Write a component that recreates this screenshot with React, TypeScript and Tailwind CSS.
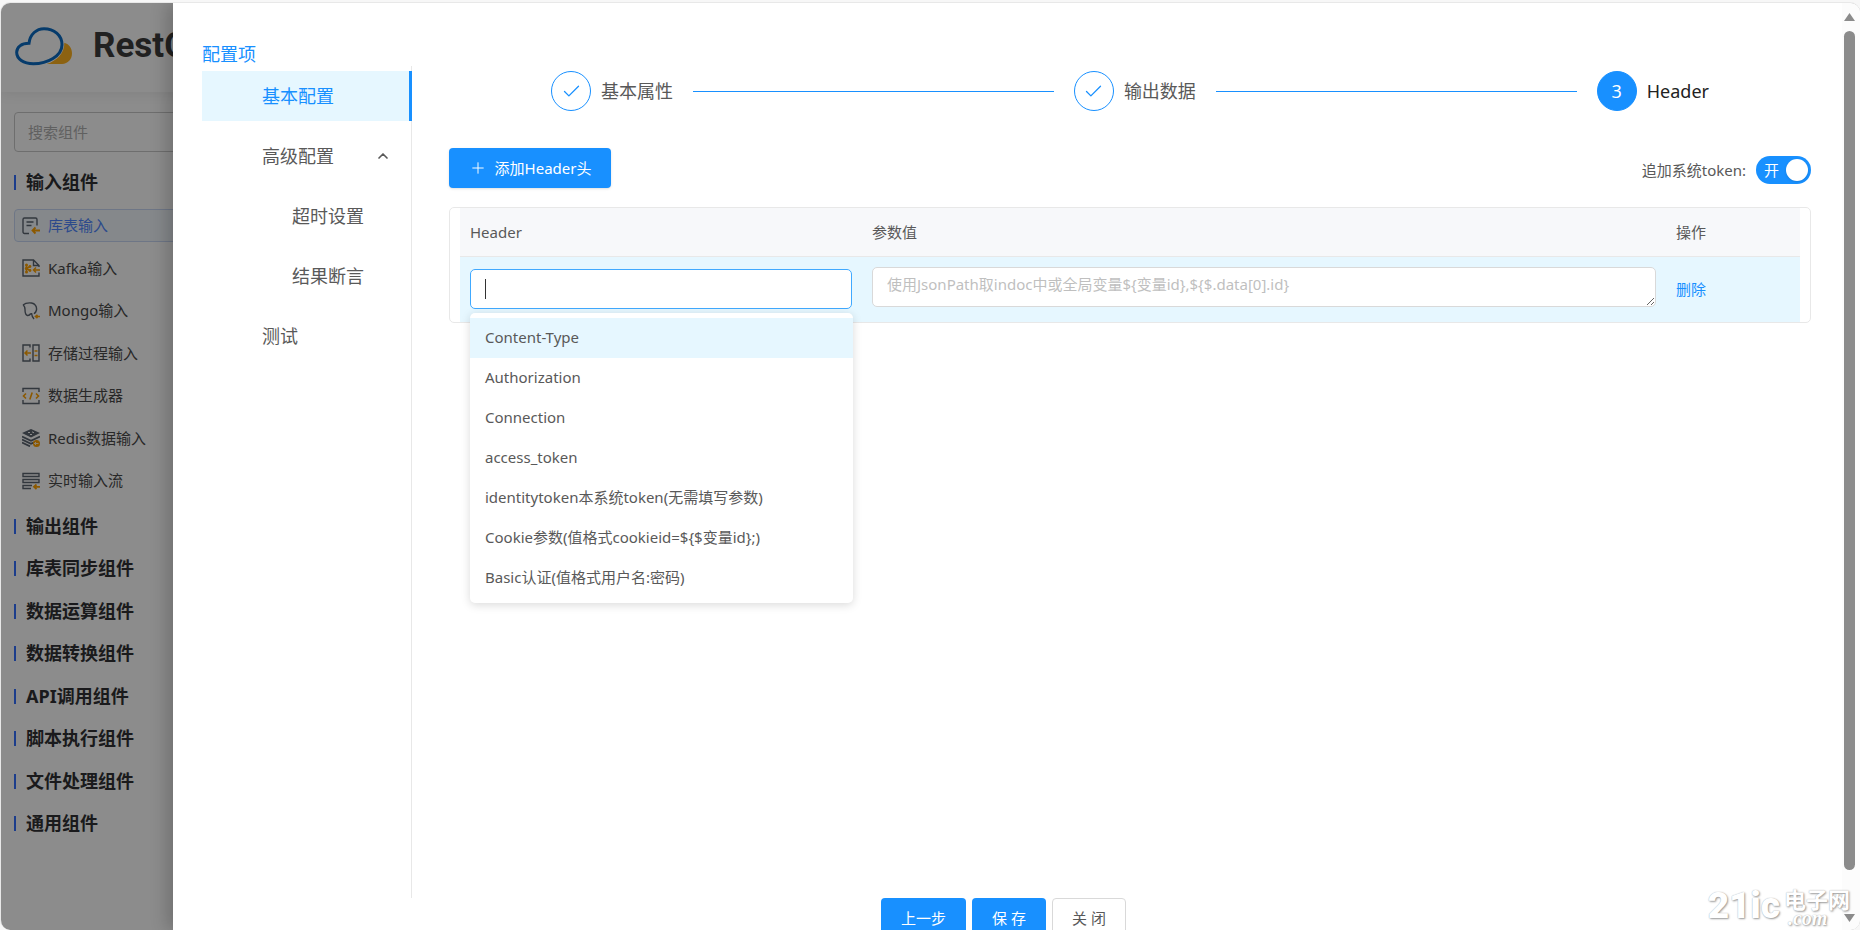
import { useState } from "react";
import type { ReactNode } from "react";
import { Check, ChevronUp, Plus } from "lucide-react";
import clsx from "clsx";

interface Component {
  name: string;
  icon: ReactNode;
}

const DARK = "#5b6470";
const ORANGE = "#ffa200";

const Icon = ({ children }: { children: ReactNode }) => (
  <svg
    viewBox="0 0 18 18"
    className="h-[18px] w-[18px] shrink-0"
    fill="none"
    stroke={DARK}
    strokeWidth="1.4"
    aria-hidden="true"
  >
    {children}
  </svg>
);

const inputs: Component[] = [
  {
    name: "库表输入",
    icon: (
      <Icon>
        <path d="M7 16.5H2.5A1.5 1.5 0 0 1 1 15V2.5A1.5 1.5 0 0 1 2.5 1h11A1.5 1.5 0 0 1 15 2.5v6M4.500 5h7M4.500 8.500h5" />
        <path stroke={ORANGE} strokeWidth="1.8" d="M18 13.500h-7M13.500 10.500l-3 3 3 3" />
      </Icon>
    ),
  },
  {
    name: "Kafka输入",
    icon: (
      <Icon>
        <path d="M17 13.500V17H1V1h10.500L17 6.500V8M11.500 1v5.500H17" />
        <path
          stroke={ORANGE}
          strokeWidth="1.5"
          d="M18 11h-6M14 8.500L11.500 11l2.500 2.500M4.500 6.500v6M4.500 9.500l3.500-2M4.500 9.500l3.500 2"
        />
        <g fill={ORANGE} stroke="none">
          <circle cx="4.500" cy="6" r="1.500" />
          <circle cx="4.500" cy="9.500" r="1.700" />
          <circle cx="4.500" cy="13" r="1.500" />
          <circle cx="8" cy="7.500" r="1.400" />
          <circle cx="8" cy="11.500" r="1.400" />
        </g>
      </Icon>
    ),
  },
  {
    name: "Mongo输入",
    icon: (
      <Icon>
        <path d="M1 3C3 1.200 6.500.700 9.500 1c3.500.500 5.500 3.500 5 7-.300 1.500-1.200 2.800-2.500 3.800M1 3c1.500.800 2 2.200 2 4.500 0 2.500.500 5.500 2.500 6 1.500.300 2.500-.800 3.300-2M9.500 11c.200 2 .500 4 2.500 6" />
        <path stroke={ORANGE} strokeWidth="1.6" d="M18 14.500h-4M15.500 12.800l-2 1.700 2 1.700" />
      </Icon>
    ),
  },
  {
    name: "存储过程输入",
    icon: (
      <Icon>
        <path d="M8 3.500V1H1v16h7v-2.500M11 1h6v16h-6z" />
        <path
          stroke={ORANGE}
          strokeWidth="1.5"
          d="M9 9H3M5.500 6.500L3 9l2.500 2.500M12.500 7h3M12.500 11.500h3"
        />
      </Icon>
    ),
  },
  {
    name: "数据生成器",
    icon: (
      <Icon>
        <path d="M1 5V1.500h16V5M1 13v3.500h16V13" />
        <path
          stroke={ORANGE}
          strokeWidth="1.6"
          d="M4 6.500L1.500 9 4 11.500M14 6.500L16.500 9 14 11.500M10.200 5.500l-2.400 7"
        />
      </Icon>
    ),
  },
  {
    name: "Redis数据输入",
    icon: (
      <Icon>
        <path fill={DARK} stroke="none" d="M9 0l9 4-9 4.500L0 4z" />
        <path strokeWidth="1.8" d="M0 7.500l9 4.300 9-4.300M0 10.500l9 4.300 3-1.400M0 13.500l8 3.800" />
        <path stroke="#fff" strokeWidth="1" d="M6 3.500h2M10 2.800l2 1M8 5.500h2" />
        <circle cx="14.500" cy="14.500" r="3.500" fill={ORANGE} stroke="none" />
        <path stroke="#fff" strokeWidth=".8" d="M16.500 14.500h-4M14 13l-1.500 1.500L14 16" />
      </Icon>
    ),
  },
  {
    name: "实时输入流",
    icon: (
      <Icon>
        <path d="M1 1.500h16v3H1zM1 7.500h16v3H1zM10 13.500H1v3h8" />
        <path stroke={ORANGE} strokeWidth="1.8" d="M18 14.800h-5.500M14.500 12.500l-2.500 2.300 2.500 2.300" />
      </Icon>
    ),
  },
];

const groups = [
  "输出组件",
  "库表同步组件",
  "数据运算组件",
  "数据转换组件",
  "API调用组件",
  "脚本执行组件",
  "文件处理组件",
  "通用组件",
];

const menu = [
  { name: "基本配置", active: true },
  { name: "高级配置", open: true },
  { name: "超时设置", child: true },
  { name: "结果断言", child: true },
  { name: "测试" },
];

const headerOptions = [
  "Content-Type",
  "Authorization",
  "Connection",
  "access_token",
  "identitytoken本系统token(无需填写参数)",
  "Cookie参数(值格式cookieid=${$变量id};)",
  "Basic认证(值格式用户名:密码)",
];

const GroupTitle = ({ name }: { name: string }) => (
  <h2 className="flex h-8 items-center gap-2.5 text-[18px] font-bold text-[#303133]">
    <span className="h-[15px] w-0.5 bg-[#3370ff]" />
    {name}
  </h2>
);

const Logo = () => (
  <svg viewBox="45 81 174 117" className="h-[39px] w-[58px] shrink-0" aria-hidden="true">
    <path
      fill="#ffb31f"
      d="M193 128c15 4 23 17 23 32 0 18-12 32-30 32h-46c30-10 54-32 53-64z"
    />
    <path
      fill="none"
      stroke="#0b6cc4"
      strokeWidth="9"
      d="M87 130C90 102 110 86 132 86c30 0 54 20 54 48 0 34-44 57-86 57-30 0-50-14-50-34 0-16 14-27 37-27z"
    />
  </svg>
);

const Sidebar = () => (
  <aside className="w-[300px] shrink-0 bg-white">
    <div className="flex h-[89px] items-center gap-5 pb-0.5 pl-[14px] shadow-[0_2px_12px_rgba(0,0,0,0.08)]">
      <Logo />
      <span className="font-[Roboto,sans-serif] text-[35px] font-bold text-[#3c3c3c]">RestC</span>
    </div>
    <div className="pl-[13px] pr-3 pt-5">
      <input
        aria-label="搜索组件"
        placeholder="搜索组件"
        className="h-10 w-full rounded border border-[#c8c8c8] px-[13px] placeholder:text-[#b0b0b0]"
      />
      <div className="pt-3.5">
        <GroupTitle name="输入组件" />
      </div>
      <ul className="mt-[11px] flex h-[288px] flex-col justify-between">
        {inputs.map((item, index) => (
          <li
            key={item.name}
            className={clsx(
              "flex h-[33px] items-center gap-2 rounded border px-[7px]",
              index === 0
                ? "border-[#c8d8f5] bg-[#f3f8fe] text-[#5088ff]"
                : "border-transparent text-[#4a4a4a]"
            )}
          >
            {item.icon}
            {item.name}
          </li>
        ))}
      </ul>
      <div className="mt-[13px] flex h-[330px] flex-col justify-between">
        {groups.map((name) => (
          <GroupTitle key={name} name={name} />
        ))}
      </div>
    </div>
  </aside>
);

const ConfigMenu = () => (
  <nav className="flex w-[210px] shrink-0 flex-col gap-2.5 border-r border-[#e8e8e8] pt-[5px] text-[18px]">
    {menu.map((item) => (
      <a
        key={item.name}
        href="#"
        className={clsx(
          "flex h-[50px] items-center justify-between pr-5",
          item.child ? "pl-[90px]" : "pl-[60px]",
          item.active && "-mr-px border-r-[3px] border-[#1890ff] bg-[#e6f7ff] text-[#1890ff]"
        )}
      >
        {item.name}
        {item.open && <ChevronUp size={16} strokeWidth={2.5} />}
      </a>
    ))}
  </nav>
);

const Step = ({ title, number }: { title: string; number?: number }) => (
  <li className={clsx("flex items-center", !number && "flex-1")}>
    <span
      className={clsx(
        "flex h-10 w-10 shrink-0 items-center justify-center rounded-full border border-[#1890ff]",
        number ? "bg-[#1890ff] text-[18px] text-white" : "text-[#1890ff]"
      )}
    >
      {number ?? <Check size={21} strokeWidth={1.5} />}
    </span>
    <span className={clsx("ml-2.5 whitespace-nowrap text-[18px]", number && "text-[#222222]")}>
      {title}
    </span>
    {!number && <span className="mx-5 h-px flex-1 bg-[#1890ff]" />}
  </li>
);

const HeaderSelect = () => (
  <div className="relative">
    <input
      aria-label="Header"
      className="block h-10 w-full rounded-[5px] border border-[#40a9ff] bg-white px-3.5 outline-none"
    />
    <span className="absolute left-[15px] top-2.5 h-5 w-px bg-[#333333]" />
    <ul
      role="listbox"
      className="absolute -right-px left-0 top-11 z-10 rounded-[5px] bg-white py-[5px] shadow-[0_2px_10px_rgba(0,0,0,0.15)]"
    >
      {headerOptions.map((option, index) => (
        <li
          key={option}
          role="option"
          aria-selected={index === 0}
          className={clsx(
            "flex h-10 items-center whitespace-nowrap px-[15px] pb-0.5",
            index === 0 && "bg-[#e6f7ff]"
          )}
        >
          {option}
        </li>
      ))}
    </ul>
  </div>
);

const HeaderTable = () => (
  <div className="mt-[17px] rounded-[5px] border border-[#e8e8e8] px-2.5">
    <table className="w-full table-fixed text-left">
      <thead>
        <tr className="h-12 border-b border-[#e8e8e8] bg-[#f7f8fa]">
          <th className="w-[30%] px-2.5 font-normal">Header</th>
          <th className="w-[60%] px-2.5 font-normal">参数值</th>
          <th className="w-[10%] px-2.5 font-normal">操作</th>
        </tr>
      </thead>
      <tbody>
        <tr className="bg-[#e6f7ff]">
          <td className="px-2.5">
            <HeaderSelect />
          </td>
          <td className="px-2.5 pb-[15px] pt-2.5">
            <textarea
              aria-label="参数值"
              placeholder="使用JsonPath取indoc中或全局变量${变量id},${$.data[0].id}"
              className="block h-10 w-full resize rounded-[5px] border border-[#d9d9d9] bg-white px-3.5 py-1 leading-6 placeholder:text-[#bfbfbf]"
            />
          </td>
          <td className="px-2.5">
            <a href="#" className="text-[#1890ff]">
              删除
            </a>
          </td>
        </tr>
      </tbody>
    </table>
  </div>
);

const Drawer = () => {
  const [appendToken, setAppendToken] = useState(true);

  return (
    <div className="absolute inset-y-0 left-[172px] right-0 flex bg-white shadow-[-6px_0_16px_rgba(0,0,0,0.2)]">
      <div className="flex min-w-0 flex-1 flex-col pl-[29px] pr-[31px]">
        <h1 className="flex h-[63px] items-end text-[18px] leading-6 text-[#1890ff]">配置项</h1>
        <div className="flex min-h-0 flex-1">
          <ConfigMenu />
          <main className="min-w-0 flex-1 pl-[37px] pt-[5px]">
            <ol className="flex px-[102px]">
              <Step title="基本属性" />
              <Step title="输出数据" />
              <Step title="Header" number={3} />
            </ol>
            <div className="mt-[37px] flex h-[42px] items-start justify-between">
              <button className="flex h-10 w-[162px] items-center justify-center gap-2 rounded bg-[#1890ff] text-white shadow-sm">
                <Plus size={18} strokeWidth={1.3} />
                添加Header头
              </button>
              <label className="flex h-full items-center gap-2.5 pt-0.5">
                追加系统token:
                <span className="relative flex h-7 w-[55px] items-center rounded-full bg-[#1890ff] pl-2 text-white">
                  <input
                    type="checkbox"
                    role="switch"
                    checked={appendToken}
                    onChange={() => setAppendToken(!appendToken)}
                    className="absolute inset-0 cursor-pointer appearance-none"
                  />
                  开
                  <span className="absolute right-[3px] top-[3px] h-[22px] w-[22px] rounded-full bg-white shadow" />
                </span>
              </label>
            </div>
            <HeaderTable />
          </main>
        </div>
        <footer className="flex h-8 shrink-0 items-start justify-center gap-1.5 pr-1.5">
          <button className="h-10 w-[85px] shrink-0 rounded bg-[#1890ff] text-white">上一步</button>
          <button className="h-10 w-[74px] shrink-0 rounded bg-[#1890ff] text-white">保 存</button>
          <button className="h-10 w-[74px] shrink-0 rounded border border-[#d9d9d9] bg-white">
            关 闭
          </button>
        </footer>
      </div>
      <div className="flex w-[18px] shrink-0 flex-col items-center bg-[#fcfcfc] pb-2 pt-2.5">
        <svg viewBox="0 0 11 8" className="mr-1 h-2 w-[11px]" fill="#8b8b8b">
          <path d="M5.500 0L11 8H0z" />
        </svg>
        <div className="mb-11 mr-1 mt-2.5 w-[11px] flex-1 rounded-full bg-[#8b8b8b]" />
        <svg viewBox="0 0 11 8" className="mr-1 h-2 w-[11px]" fill="#8b8b8b">
          <path d="M0 0h11L5.500 8z" />
        </svg>
      </div>
    </div>
  );
};

const Watermark = () => (
  <div className="absolute bottom-1 right-2.5 flex items-center gap-1 text-white [text-shadow:1px_1px_2px_#999999,0_0_1px_#aaaaaa]">
    <span className="font-[Roboto,sans-serif] text-[37px] font-black leading-10">21ic</span>
    <span className="flex flex-col">
      <span className="font-['Noto_Sans_CJK_SC',sans-serif] text-[22px] font-bold leading-6">
        电子网
      </span>
      <span className="pl-1 font-['Liberation_Serif',serif] text-[20px] font-bold italic leading-4">
        .com
      </span>
    </span>
  </div>
);

export default function App() {
  return (
    <div className="h-screen overflow-hidden bg-[#f7f7f7] pt-0.5 font-['Noto_Sans','Noto_Sans_CJK_SC',sans-serif] text-[15px] text-[#595959]">
      <div className="relative flex h-full overflow-hidden rounded-[10px] border-l border-t border-[#e8e8e8] bg-white">
        <Sidebar />
        <div className="absolute inset-0 bg-black/45" />
        <Drawer />
        <Watermark />
      </div>
    </div>
  );
}
